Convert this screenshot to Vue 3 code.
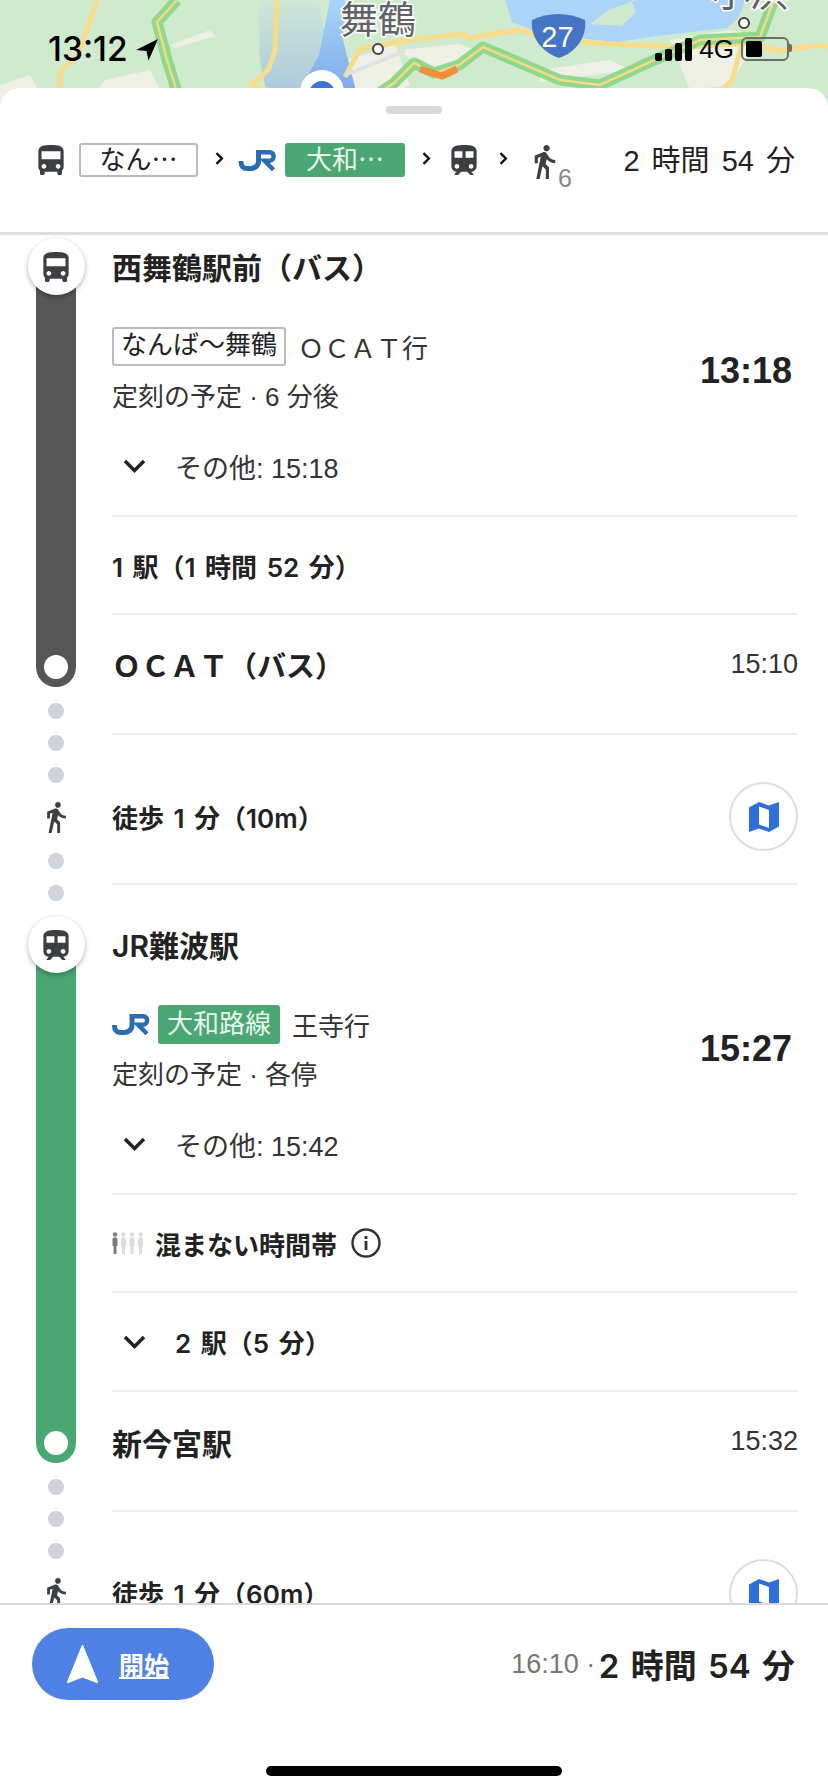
<script setup>
const threeDots = [1, 2, 3];
const twoDots = [1, 2];
const crowd = ["#7b7b7b", "#dcdcdc", "#dcdcdc", "#dcdcdc"];
</script>

<template>
  <div class="page">
    <svg class="defs" width="0" height="0">
      <symbol id="bus" viewBox="4 2 16 19">
        <path d="M4 16c0 .88.39 1.67 1 2.22V20c0 .55.45 1 1 1h1c.55 0 1-.45 1-1v-1h8v1c0 .55.45 1 1 1h1c.55 0 1-.45 1-1v-1.78c.61-.55 1-1.34 1-2.22V6c0-3.5-3.58-4-8-4s-8 .5-8 4v10zm3.5 1c-.83 0-1.5-.67-1.5-1.5S6.67 14 7.5 14s1.5.67 1.5 1.5S8.33 17 7.5 17zm9 0c-.83 0-1.5-.67-1.5-1.5s.67-1.5 1.5-1.5 1.5.67 1.5 1.5-.67 1.5-1.5 1.5zm1.5-6H6V6h12v5z" />
      </symbol>
      <symbol id="train" viewBox="4 2 16 19">
        <path d="M12 2c-4 0-8 .5-8 4v9.5C4 17.43 5.57 19 7.5 19L6 20.5v.5h2.23l2-2H14l2 2h2v-.5L16.5 19c1.93 0 3.5-1.57 3.5-3.5V6c0-3.5-3.58-4-8-4zM7.5 17c-.83 0-1.5-.67-1.5-1.5S6.67 14 7.5 14s1.5.67 1.5 1.5S8.33 17 7.5 17zm3.5-7H6V6h5v4zm2 0V6h5v4h-5zm3.5 7c-.83 0-1.5-.67-1.5-1.5s.67-1.5 1.5-1.5 1.5.67 1.5 1.5-.67 1.5-1.5 1.5z" />
      </symbol>
      <symbol id="walk" viewBox="6 1.5 13 21.5">
        <path d="M13.5 5.5c1.1 0 2-.9 2-2s-.9-2-2-2-2 .9-2 2 .9 2 2 2zM9.8 8.9L7 23h2.1l1.8-8 2.1 2v6h2v-7.5l-2.1-2 .6-3C14.8 12 16.8 13 19 13v-2c-1.9 0-3.5-1-4.3-2.4l-1-1.6c-.4-.6-1-1-1.7-1-.3 0-.5.1-.8.1L6 8.3V13h2V9.6l1.8-.7" />
      </symbol>
      <symbol id="jr" viewBox="0 0 38 21">
        <path d="M2.500 11v1c0 4 2.500 6.500 6 6.500h3.500c4.500 0 8-3 8-7V0" fill="none" stroke="#2b6cb3" stroke-width="5" />
        <path d="M20 2.200h11c5.500 0 5.500 8.500 0 8.500h-5l9 9" fill="none" stroke="#2b6cb3" stroke-width="4.400" />
      </symbol>
      <symbol id="folded-map" viewBox="0 0 30 30">
        <path d="M0 5.500 10 0l10 3.500L30 0v24.500L20 30 10 26.500 0 30zM10 4.500v18l10 3.500V8z" fill="#2f6fdb" fill-rule="evenodd" />
      </symbol>
      <symbol id="caret" viewBox="0 0 8 12">
        <path d="M1.200 1 6.200 6 1.200 11" fill="none" stroke="#111" stroke-width="2.200" />
      </symbol>
    </svg>

    <div class="map">
      <svg width="828" height="110" viewBox="0 0 828 110">
        <defs>
          <linearGradient id="cone" x1="0" y1="0" x2="0" y2="1">
            <stop offset="0" stop-color="#a9d4fa" />
            <stop offset="1" stop-color="#7ba9ea" />
          </linearGradient>
          <linearGradient id="valley" x1="0" y1="0" x2="0" y2="1">
            <stop offset="0" stop-color="#cde8d6" />
            <stop offset="1" stop-color="#a9c6de" />
          </linearGradient>
        </defs>
        <rect width="828" height="110" fill="#cfeacd" />
        <path d="M80 110 105 80 150 70 170 110zM170 45l40-15 5 6-40 12zM0 85l30-10 20 35H0zM670 40l60-10 30 5-30 50-40 5zM400 50l60-6 25 10-60 20zM540 70l70-10 20 10-90 12zM345 60l50-15 15 40-50 25z" fill="#eef0e6" />
        <path d="M258 0h60l20 100h-70l-8-40z" fill="url(#valley)" />
        <path d="M505 0h240c-4 14-8 20-18 28l-70 8-40 6-60-6-25-6-20-8z" fill="#acd3f8" />
        <path d="M590 24 608 10 636 0h-5l5 12-14 14z" fill="#cfe9cd" />
        <path d="M330 0h15l-2 40 14 55h-60l22-40z" fill="url(#cone)" />
        <path d="M97 0 78 55 60 72v38M277 0l-2 50-6 18-4 5-16 14M345 77l15-28 54-10 50-5 3 4 52-8 60 12 50 3 60 2 60-4 30 8 40-6 50 10M702 110l30-30 14-50M250 86l60 14" fill="none" stroke="#f6dc8b" stroke-width="5" />
        <path d="M345 75l60-24" fill="none" stroke="#dfe2e3" stroke-width="4" />
        <path d="M177 0 157 22l10 38 10 32M376 95l18-12 20-20 20 10 25-8 24-18 77 33 40 5 50-23 50-22 60-3 15-40" fill="none" stroke="#8fd98c" stroke-width="11" stroke-linejoin="round" />
        <path d="M177 0 157 22l10 38 10 32M376 95l18-12 20-20 20 10 25-8 24-18 77 33 40 5 50-23 50-22 60-3 15-40" fill="none" stroke="#f4d98b" stroke-width="2.500" />
        <path d="M420 69l22 7 15-7" fill="none" stroke="#f08e3e" stroke-width="7" stroke-linejoin="round" />
        <circle cx="378" cy="49" r="5" fill="#fff" stroke="#444" stroke-width="2" />
        <circle cx="744" cy="23" r="5" fill="#fff" stroke="#444" stroke-width="2" />
        <text class="place" x="340" y="33">舞鶴</text>
        <text class="place" x="712" y="6">小浜</text>
        <path d="M532 20c16-8 36-8 53 0 2 16-8 32-26 38-18-6-29-22-27-38z" fill="#4675c6" />
        <text class="shield" x="557.500" y="47" text-anchor="middle">27</text>
        <circle cx="322" cy="92" r="22" fill="#fff" />
        <circle cx="322" cy="94" r="13" fill="#3d74d8" />
      </svg>
      <div class="status">
        <div class="clock">
          <span>13:12</span>
          <svg width="22" height="22" viewBox="0 0 21 21"><path d="M21 0 0 10.500l10 1 2 9z" fill="#000" /></svg>
        </div>
        <div class="status-right">
          <div class="signal"><i></i><i></i><i></i><i></i></div>
          <span class="network">4G</span>
          <div class="battery"><div class="battery-level"></div></div>
        </div>
      </div>
    </div>

    <div class="sheet">
      <div class="summary">
        <div class="handle"></div>
        <div class="summary-row">
          <svg class="sum-icon"><use href="#bus" /></svg>
          <span class="sum-badge">なん⋯</span>
          <svg class="caret"><use href="#caret" /></svg>
          <svg class="sum-jr"><use href="#jr" /></svg>
          <span class="sum-badge green">大和⋯</span>
          <svg class="caret"><use href="#caret" /></svg>
          <svg class="sum-icon"><use href="#train" /></svg>
          <svg class="caret"><use href="#caret" /></svg>
          <div class="sum-walk">
            <svg class="sum-walk-icon"><use href="#walk" /></svg>
            <span>6</span>
          </div>
          <span class="sum-total">2 時間 54 分</span>
        </div>
      </div>

      <div class="timeline">
        <div class="rail">
          <div class="leg first dark">
            <div class="node"><svg><use href="#bus" /></svg></div>
            <div class="end"></div>
          </div>
          <div class="dots"><i v-for="d in threeDots" :key="d"></i></div>
          <svg class="rail-walk"><use href="#walk" /></svg>
          <div class="dots after"><i v-for="d in twoDots" :key="d"></i></div>
          <div class="leg second light">
            <div class="node"><svg><use href="#train" /></svg></div>
            <div class="end"></div>
          </div>
          <div class="dots"><i v-for="d in threeDots" :key="d"></i></div>
          <svg class="rail-walk"><use href="#walk" /></svg>
        </div>

        <div class="content">
          <div class="row title-row"><span class="stop">西舞鶴駅前（バス）</span></div>
          <div class="detail">
            <div class="main">
              <div>
                <div class="line-row">
                  <span class="badge">なんば〜舞鶴</span>
                  <span class="dest">ＯＣＡＴ行</span>
                </div>
                <div class="sched">定刻の予定 · 6 分後</div>
              </div>
              <span class="depart">13:18</span>
            </div>
            <div class="more">
              <svg width="23" height="14" viewBox="0 0 23 14"><path d="M2 2l9.500 9.500L21 2" fill="none" stroke="#222" stroke-width="3.500" /></svg>
              <span>その他: 15:18</span>
            </div>
          </div>
          <div class="row ride"><span class="medium">1 駅（1 時間 52 分）</span></div>
          <div class="row arrive">
            <span class="stop ocat">ＯＣＡＴ（バス）</span>
            <span class="time">15:10</span>
          </div>
          <div class="row walk-row">
            <span class="medium">徒歩 1 分（10m）</span>
            <button class="map-btn"><svg><use href="#folded-map" /></svg></button>
          </div>

          <div class="row title-row second-title"><span class="stop">JR難波駅</span></div>
          <div class="detail">
            <div class="main">
              <div>
                <div class="line-row">
                  <svg class="line-jr"><use href="#jr" /></svg>
                  <span class="badge green">大和路線</span>
                  <span class="dest near">王寺行</span>
                </div>
                <div class="sched">定刻の予定 · 各停</div>
              </div>
              <span class="depart">15:27</span>
            </div>
            <div class="more">
              <svg width="23" height="14" viewBox="0 0 23 14"><path d="M2 2l9.500 9.500L21 2" fill="none" stroke="#222" stroke-width="3.500" /></svg>
              <span>その他: 15:42</span>
            </div>
          </div>
          <div class="row ride">
            <div class="crowd">
              <svg width="32" height="22" viewBox="0 0 32 22">
                <g v-for="(c, i) in crowd" :key="i" :fill="c">
                  <circle :cx="3 + i * 8.500" cy="2.500" r="2.200" />
                  <path :transform="`translate(${i * 8.500} 0)`" d="M0.500 7c0-1 1-1.500 2.500-1.500S5.500 6 5.500 7v7H4.500v8h-3v-8H.5z" />
                </g>
              </svg>
              <span class="medium">混まない時間帯</span>
              <svg width="30" height="30" viewBox="0 0 30 30">
                <circle cx="15" cy="15" r="13.500" fill="none" stroke="#333" stroke-width="2.400" />
                <rect x="13.600" y="13" width="2.800" height="9" fill="#333" />
                <rect x="13.600" y="8" width="2.800" height="3" fill="#333" />
              </svg>
            </div>
          </div>
          <div class="row stations">
            <svg width="23" height="14" viewBox="0 0 23 14"><path d="M2 2l9.500 9.500L21 2" fill="none" stroke="#222" stroke-width="3.500" /></svg>
            <span class="medium">2 駅（5 分）</span>
          </div>
          <div class="row arrive">
            <span class="stop">新今宮駅</span>
            <span class="time">15:32</span>
          </div>
          <div class="row walk-row last">
            <span class="medium">徒歩 1 分（60m）</span>
            <button class="map-btn"><svg><use href="#folded-map" /></svg></button>
          </div>
        </div>
      </div>

      <div class="footer">
        <div class="footer-row">
          <button class="start">
            <svg width="31" height="38" viewBox="0 0 31 38"><path d="M15.500 0 31 38 15.500 32 0 38z" fill="#fff" stroke="#fff" stroke-linejoin="round" /></svg>
            <span>開始</span>
          </button>
          <div class="totals">
            <span class="arrival">16:10 · </span>
            <span class="total">2 時間 54 分</span>
          </div>
        </div>
        <div class="home"></div>
      </div>
    </div>
  </div>
</template>

<style>
html,
body {
  margin: 0;
  background: #fff;
}
</style>

<style scoped>
.page {
  position: relative;
  width: 828px;
  height: 1792px;
  overflow: hidden;
  font-family: "Liberation Sans", "Noto Sans CJK JP", sans-serif;
  color: #222;
  font-size: 26px;
}
.defs {
  position: absolute;
}
.map {
  position: relative;
  height: 110px;
}
.map > svg {
  display: block;
}
.place {
  font-family: "Noto Sans CJK JP", sans-serif;
  font-size: 38px;
  fill: #5f6368;
  stroke: #fff;
  stroke-width: 3px;
  paint-order: stroke;
}
.shield {
  font-family: "Liberation Sans", sans-serif;
  font-size: 29px;
  fill: #fff;
}
.status {
  position: absolute;
  top: 30px;
  left: 48px;
  right: 39px;
  display: flex;
  justify-content: space-between;
  align-items: center;
  color: #000;
}
.clock {
  display: flex;
  align-items: center;
  gap: 8px;
  font-family: Inter, sans-serif;
  font-size: 33.500px;
  font-weight: 500;
  line-height: 38px;
}
.clock svg {
  margin-top: 2px;
}
.status-right {
  display: flex;
  align-items: center;
  gap: 7px;
}
.signal {
  display: flex;
  align-items: flex-end;
  gap: 3px;
  height: 23px;
}
.signal i {
  width: 7px;
  border-radius: 2px;
  background: #000;
}
.signal i:nth-child(1) { height: 8px; }
.signal i:nth-child(2) { height: 12px; }
.signal i:nth-child(3) { height: 18px; }
.signal i:nth-child(4) { height: 23px; }
.network {
  font-size: 26px;
  line-height: 28px;
}
.battery {
  position: relative;
  box-sizing: border-box;
  width: 48px;
  height: 24px;
  padding: 2px 3px;
  border: 2px solid #6b6f68;
  border-radius: 6px;
}
.battery::after {
  content: "";
  position: absolute;
  top: 5px;
  right: -5px;
  width: 3px;
  height: 8px;
  border-radius: 0 2px 2px 0;
  background: #6b6f68;
}
.battery-level {
  width: 16px;
  height: 16px;
  border-radius: 2px;
  background: #000;
}
.sheet {
  position: relative;
  margin-top: -22px;
  height: 1704px;
  display: flex;
  flex-direction: column;
  background: #fff;
  border-radius: 20px 20px 0 0;
  overflow: hidden;
}
.summary {
  box-sizing: border-box;
  flex: none;
  height: 147px;
  padding-top: 18px;
  border-bottom: 3px solid #dedede;
}
.handle {
  width: 56px;
  height: 8px;
  margin: 0 auto;
  border-radius: 4px;
  background: #d8d8d8;
}
.summary-row {
  display: flex;
  align-items: center;
  height: 36px;
  margin-top: 28px;
  padding-left: 38px;
}
.sum-icon {
  width: 26px;
  height: 30px;
  fill: #3c4043;
}
.sum-badge {
  box-sizing: border-box;
  display: block;
  width: 119px;
  height: 34px;
  margin-left: 15px;
  border: 2px solid #bbb;
  border-radius: 3px;
  line-height: 30px;
  text-align: center;
  font-size: 26px;
}
.sum-badge.green {
  width: 120px;
  margin-left: 8px;
  border: none;
  background: #4aa672;
  color: #e9f6ee;
  line-height: 34px;
}
.caret {
  width: 9px;
  height: 13px;
  margin: -3px 15px 0 17px;
}
.sum-jr {
  width: 39px;
  height: 21px;
  margin-left: -1px;
}
.sum-icon + .caret {
  margin-left: 22px;
  margin-right: 18px;
}
.sum-badge.green + .caret {
  margin-right: 20px;
}
.sum-walk {
  display: flex;
  margin-top: 14px;
  margin-left: 8px;
  color: #888;
  font-size: 25px;
}
.sum-walk-icon {
  width: 22px;
  height: 34px;
  fill: #3c4043;
}
.sum-walk span {
  margin: 22px 0 0 2px;
  line-height: 22px;
}
.sum-total {
  margin-left: auto;
  margin-right: 33px;
  margin-top: -4px;
  font-size: 29px;
  word-spacing: 4px;
}
.timeline {
  flex: 1;
  display: flex;
  min-height: 0;
  overflow: hidden;
}
.rail {
  flex: none;
  width: 112px;
  display: flex;
  flex-direction: column;
  align-items: center;
}
.leg {
  flex: none;
  width: 40px;
  display: flex;
  flex-direction: column;
  align-items: center;
  justify-content: space-between;
  border-radius: 0 0 20px 20px;
}
.leg.first {
  height: 421px;
  margin-top: 31px;
}
.leg.second {
  height: 519px;
  margin-top: 43px;
}
.leg.dark {
  background: #565656;
}
.leg.light {
  background: #4aa672;
}
.node {
  display: flex;
  align-items: center;
  justify-content: center;
  flex: none;
  width: 57px;
  height: 57px;
  margin-top: -28px;
  border-radius: 50%;
  background: #fff;
  box-shadow: 0 2px 5px rgba(0, 0, 0, 0.3);
}
.node svg {
  width: 26px;
  height: 30px;
  fill: #3c4043;
}
.end {
  flex: none;
  width: 24px;
  height: 24px;
  margin-bottom: 8px;
  border-radius: 50%;
  background: #fff;
}
.dots {
  flex: none;
  display: flex;
  flex-direction: column;
  gap: 16px;
  margin-top: 16px;
}
.dots i {
  display: block;
  width: 16px;
  height: 16px;
  border-radius: 50%;
  background: #ced3dc;
}
.dots.after {
  margin-top: 20px;
}
.rail-walk {
  flex: none;
  width: 21px;
  height: 31px;
  margin-top: 19px;
  fill: #3c4043;
}
.content {
  flex: 1;
  min-width: 0;
  margin-right: 30px;
}
.row {
  box-sizing: border-box;
  display: flex;
  align-items: center;
  justify-content: space-between;
  border-bottom: 2px solid #eee;
}
.title-row {
  height: 62px;
  border-bottom: none;
}
.second-title {
  height: 90px;
  padding-top: 27px;
}
.stop {
  font-family: Inter, "Noto Sans CJK JP", sans-serif;
  font-size: 30px;
  font-weight: 600;
}
.stop.ocat {
  font-size: 29px;
}
.medium {
  font-family: Inter, "Noto Sans CJK JP", sans-serif;
  font-weight: 600;
  word-spacing: 3px;
}
.detail {
  box-sizing: border-box;
  height: 220px;
  padding-top: 30px;
  border-bottom: 2px solid #eee;
}
.main {
  display: flex;
  align-items: center;
  justify-content: space-between;
  padding-right: 6px;
}
.line-row {
  display: flex;
  align-items: center;
  height: 39px;
}
.badge {
  box-sizing: border-box;
  height: 39px;
  padding: 0 7px;
  border: 2px solid #bbb;
  border-radius: 3px;
  line-height: 33px;
}
.badge.green {
  margin-left: 8px;
  padding: 0 9px;
  border: none;
  background: #4aa672;
  color: #e9f6ee;
  line-height: 39px;
}
.line-jr {
  width: 38px;
  height: 21px;
}
.dest {
  margin-left: 12px;
  color: #333;
}
.sched {
  height: 38px;
  margin-top: 12px;
  line-height: 38px;
  color: #333;
}
.depart {
  margin-top: -1px;
  font-size: 36px;
  font-weight: 700;
}
.more {
  display: flex;
  align-items: center;
  gap: 29px;
  height: 40px;
  margin-top: 30px;
  padding-left: 11px;
  color: #333;
  font-size: 27px;
}
.ride {
  height: 98px;
}
.arrive {
  height: 120px;
  align-items: flex-start;
  padding-top: 26px;
  line-height: 52px;
}
.arrive .time {
  margin-top: -3px;
}
.time {
  font-size: 27px;
  color: #333;
}
.walk-row {
  height: 150px;
  padding-top: 15px;
}
.walk-row.last {
  height: 148px;
  border-bottom: none;
  align-items: flex-start;
  padding-top: 47px;
}
.walk-row.last .medium {
  margin-top: 15px;
}
.map-btn {
  display: flex;
  align-items: center;
  justify-content: center;
  width: 69px;
  height: 69px;
  padding: 0;
  border: 2px solid #dedede;
  border-radius: 50%;
  background: #fff;
}
.map-btn svg {
  width: 30px;
  height: 30px;
}
.crowd {
  display: flex;
  align-items: center;
  gap: 11px;
}
.crowd .medium {
  margin-right: 3px;
}
.stations {
  height: 99px;
  justify-content: flex-start;
  gap: 29px;
  padding-left: 11px;
}
.footer {
  flex: none;
  position: relative;
  height: 189px;
  border-top: 2px solid #d8d8d8;
  background: #fff;
  box-sizing: border-box;
}
.footer-row {
  display: flex;
  align-items: center;
  justify-content: space-between;
  padding: 23px 33px 0 32px;
}
.start {
  display: flex;
  align-items: center;
  gap: 21px;
  box-sizing: border-box;
  width: 182px;
  height: 72px;
  padding: 0 0 0 35px;
  border: none;
  border-radius: 36px;
  background: #4f81e4;
  color: #fff;
  font: inherit;
  font-size: 25px;
  font-weight: 700;
}
.start span {
  text-decoration: underline;
}
.totals {
  display: flex;
  align-items: center;
  white-space: pre;
}
.arrival {
  margin-right: -4px;
  color: #777;
  font-size: 27px;
}
.total {
  font-family: Inter, "Noto Sans CJK JP", sans-serif;
  font-size: 33px;
  font-weight: 600;
  word-spacing: 3px;
}
.home {
  position: absolute;
  left: 266px;
  bottom: 16px;
  width: 296px;
  height: 10px;
  border-radius: 5px;
  background: #000;
}
</style>
